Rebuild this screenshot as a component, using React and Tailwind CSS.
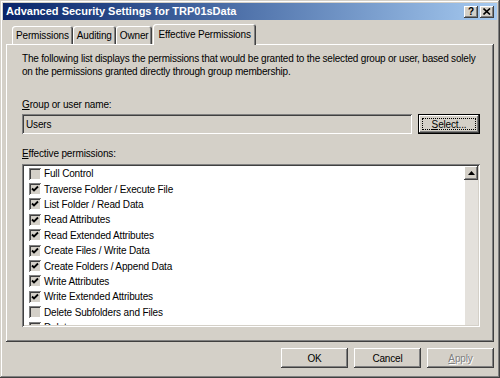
import React from "react";

const RAISED =
  "shadow-[inset_-1px_-1px_#404040,inset_1px_1px_#ffffff,inset_-2px_-2px_#808080,inset_2px_2px_#d4d0c8]";
const SUNKEN =
  "shadow-[inset_1px_1px_#808080,inset_-1px_-1px_#ffffff,inset_2px_2px_#404040,inset_-2px_-2px_#d4d0c8]";

const items = [
  ["Full Control", false],
  ["Traverse Folder / Execute File", true],
  ["List Folder / Read Data", true],
  ["Read Attributes", true],
  ["Read Extended Attributes", true],
  ["Create Files / Write Data", true],
  ["Create Folders / Append Data", true],
  ["Write Attributes", true],
  ["Write Extended Attributes", true],
  ["Delete Subfolders and Files", false],
  ["Delete", true],
];

function Check({ on }) {
  return (
    <div className={`w-[12px] h-[12px] bg-[#d4d0c8] ${SUNKEN} flex items-center justify-center shrink-0`}>
      {on && (
        <svg width="8" height="8" viewBox="0 0 8 8">
          <path d="M1 3.5 L3 5.5 L7 1.5" stroke="#000" strokeWidth="1.8" fill="none" />
        </svg>
      )}
    </div>
  );
}

function Tab({ label, selected }) {
  if (selected) {
    return (
      <div className="relative z-10 -mb-px h-[21px] px-[5px] bg-[#d4d0c8] rounded-t-[3px] shadow-[inset_1px_1px_#ffffff,inset_-1px_0_#404040,inset_-2px_0_#808080] flex items-start pt-[4px]">
        <span>{label}</span>
      </div>
    );
  }
  return (
    <div className="h-[18px] px-[4px] bg-[#d4d0c8] rounded-t-[3px] shadow-[inset_1px_1px_#ffffff,inset_-1px_0_#404040,inset_-2px_0_#808080] flex items-start pt-[3px]">
      <span>{label}</span>
    </div>
  );
}

function Btn({ children, disabled, def, className = "" }) {
  return (
    <div
      className={`h-[20px] flex items-center justify-center bg-[#d4d0c8] ${
        def ? "border border-black" : ""
      } ${className}`}
    >
      <div className={`w-full h-full flex items-center justify-center ${RAISED} relative`}>
        {def && <div className="absolute inset-[3px] border border-dotted border-black" />}
        <span
          className={
            disabled ? "text-[#808080] [text-shadow:1px_1px_0_#ffffff]" : "text-black"
          }
        >
          {children}
        </span>
      </div>
    </div>
  );
}

export default function App() {
  return (
    <div
      className={`w-[500px] h-[378px] bg-[#d4d0c8] overflow-hidden font-['Liberation_Sans',Arial,sans-serif] text-[10px] tracking-[-0.15px] leading-[13px] text-black p-[3px] flex flex-col shadow-[inset_-1px_-1px_#404040,inset_1px_1px_#d4d0c8,inset_-2px_-2px_#808080,inset_2px_2px_#ffffff]`}
    >
      {/* Title bar */}
      <div className="h-[17px] shrink-0 bg-gradient-to-r from-[#0a246a] to-[#a6caf0] flex items-center justify-between pl-[3px] pr-[3px]">
        <span className="text-white font-bold text-[11px] tracking-normal">
          Advanced Security Settings for TRP01sData
        </span>
        <div className="flex gap-[2px]">
          <div className={`w-[14px] h-[12px] bg-[#d4d0c8] ${RAISED} flex items-center justify-center`}>
            <span className="font-bold text-[10px] leading-[10px] text-black">?</span>
          </div>
          <div className={`w-[14px] h-[12px] bg-[#d4d0c8] ${RAISED} flex items-center justify-center`}>
            <svg width="8" height="7" viewBox="0 0 8 7">
              <path d="M0.5 0.5 L7 6.5 M7 0.5 L0.5 6.5" stroke="#000" strokeWidth="1.6" />
            </svg>
          </div>
        </div>
      </div>

      {/* Body */}
      <div className="flex-1 flex flex-col pl-[3px] pr-[3px] pt-[4px]">
        {/* Tabs */}
        <div className="h-[20px] flex items-end pl-[6px]">
          <Tab label="Permissions" />
          <Tab label="Auditing" />
          <Tab label="Owner" />
          <div className="pl-[1px]">
            <Tab label="Effective Permissions" selected />
          </div>
        </div>

        {/* Panel */}
        <div className="h-[298px] flex flex-col pl-[16px] pr-[14px] pt-[8px] shadow-[inset_-1px_-1px_#404040,inset_1px_1px_#ffffff,inset_-2px_-2px_#808080]">
          <p className="whitespace-nowrap tracking-[-0.2px]">
            The following list displays the permissions that would be granted to the selected group or user, based solely
            <br />
            on the permissions granted directly through group membership.
          </p>

          <div className="mt-[20px]">
            <span className="underline">G</span>roup or user name:
          </div>
          <div className="mt-[3px] flex gap-[6px]">
            <div className={`flex-1 h-[20px] bg-[#d4d0c8] ${SUNKEN} flex items-center pl-[4px]`}>
              Users
            </div>
            <Btn def className="w-[62px]">
              <span className="underline">S</span>elect...
            </Btn>
          </div>

          <div className="mt-[13px]">
            <span className="underline">E</span>ffective permissions:
          </div>
          <div className={`mt-[4px] h-[163px] bg-white ${SUNKEN} p-[2px] flex`}>
            <div className="flex-1 overflow-hidden flex flex-col pl-[5px]">
              {items.map(([label, on]) => (
                <div key={label} className="h-[15.4px] shrink-0 flex items-center gap-[3px]">
                  <Check on={on} />
                  <span className="whitespace-nowrap">{label}</span>
                </div>
              ))}
            </div>
            <div className="w-[14px] bg-[#e4e1dc] shadow-[inset_1px_0_#ffffff] flex flex-col">
              <div className={`h-[14px] bg-[#d4d0c8] ${RAISED} flex items-center justify-center`}>
                <svg width="7" height="4" viewBox="0 0 7 4">
                  <path d="M3.5 0 L7 4 L0 4 Z" fill="#000" />
                </svg>
              </div>
            </div>
          </div>
        </div>

        {/* Buttons */}
        <div className="mt-[6px] flex justify-end gap-[6px]">
          <Btn className="w-[67px]">OK</Btn>
          <Btn className="w-[67px]">Cancel</Btn>
          <Btn disabled className="w-[67px]">
            <span className="underline">A</span>pply
          </Btn>
        </div>
      </div>
    </div>
  );
}
